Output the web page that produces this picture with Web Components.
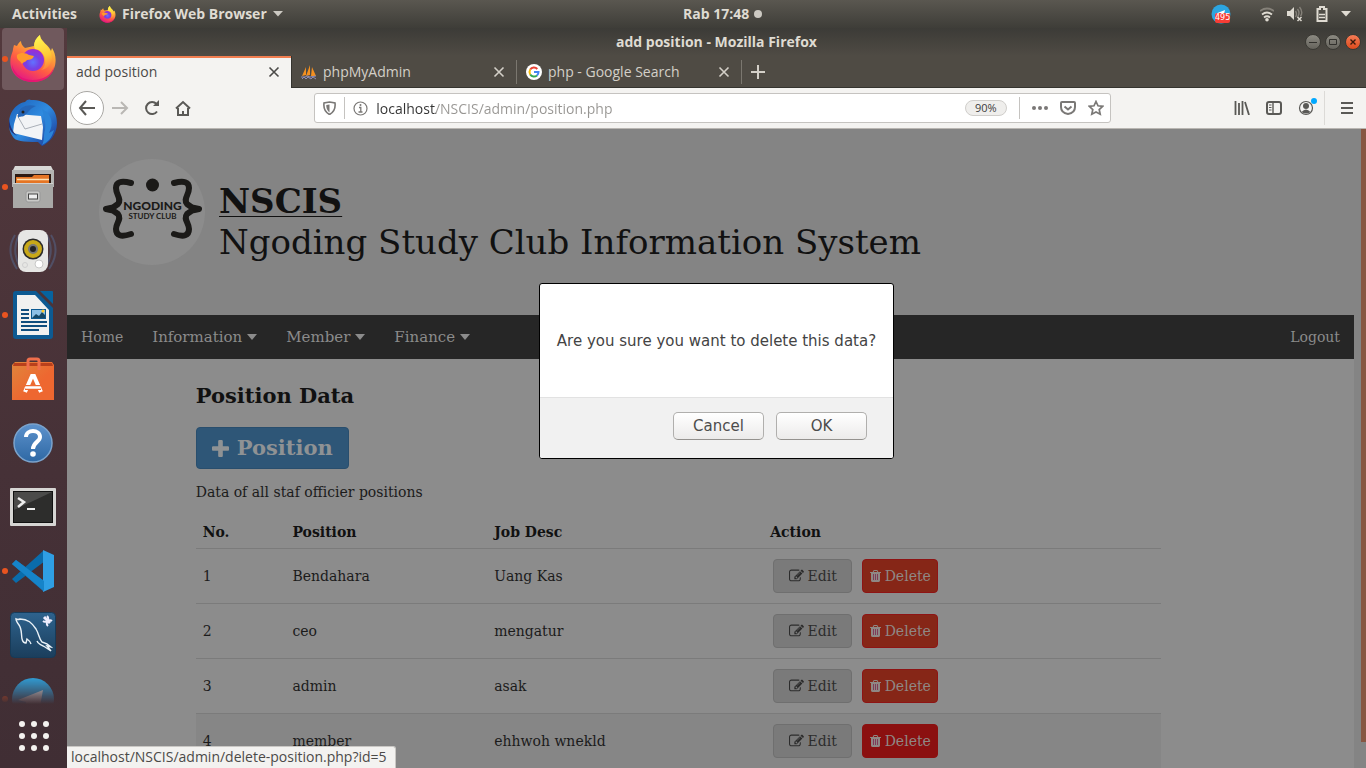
<!DOCTYPE html>
<html lang="id">
<head>
<meta charset="utf-8">
<title>add position - Mozilla Firefox</title>
<style>
  html, body { margin: 0; height: 100%; }
  body { overflow: hidden; font: 14px/20px "Open Sans", "Noto Sans", sans-serif; }
</style>
</head>
<body>
<desktop-shell></desktop-shell>
<script>
const base = `*{box-sizing:border-box}button{font:inherit;color:inherit;background:none;border:0;padding:0;margin:0}a{color:inherit;text-decoration:none}svg{display:block;flex:none}`;

/* Registers an element whose shadow root is cloned from a template. */
function component(name, css, html, setup) {
  const tpl = document.createElement('template');
  tpl.innerHTML = `<style>${base}${css}</style>${html}`;
  customElements.define(name, class extends HTMLElement {
    constructor() {
      super();
      this.attachShadow({ mode: 'open' }).append(tpl.content.cloneNode(true));
    }
    connectedCallback() { if (setup) setup(this, this.shadowRoot); }
  });
}

const firefox = id => `
  <defs>
    <linearGradient id="${id}a" x1=".8" y1="0" x2=".3" y2="1"><stop offset="0" stop-color="#fff44f"/><stop offset=".35" stop-color="#ffa436"/><stop offset=".65" stop-color="#ff5a45"/><stop offset="1" stop-color="#e31587"/></linearGradient>
    <radialGradient id="${id}b" cx=".5" cy=".6" r=".6"><stop offset="0" stop-color="#6173ff"/><stop offset=".5" stop-color="#7542e5"/><stop offset="1" stop-color="#a12ad0"/></radialGradient>
    <linearGradient id="${id}c" x1=".5" y1="0" x2=".7" y2="1"><stop offset="0" stop-color="#fff650"/><stop offset=".6" stop-color="#ffc936"/><stop offset="1" stop-color="#ff7a3a"/></linearGradient>
  </defs>
  <path d="M4 14c0 3-2 5-2.600 11C.500 38 10 47 24 47s22.600-10 22.600-22c0-5-1.600-9-3.600-12l-1 3c-2-5-6-7-8-10-2-2-3-4-3-6-4 3-6 7-6 11l-9 2c-3-2-4-5-4-7-2 1-3 3-4 5l-3-1z" fill="url(#${id}a)"/>
  <circle cx="24" cy="25" r="11" fill="url(#${id}b)"/>
  <path d="M31 0c-5 4-7 9-5 14 4 0 9 4 10 10 1 5-1 9-4 11 6-1 10-5 11-11 0-8-4-12-8-16-3-3-4-5-4-8z" fill="url(#${id}c)"/>
  <path d="M8 20c4-3 9-2 12 0l5 1c-1 3-4 4-7 4-1 2-4 2-5 4-2-4-6-4-5-9z" fill="#ff9a2b"/>
  <path d="M3 30c3 10 11 15 21 15s18-5 21-13c-1 9-10 15-21 15S3 40 3 30z" fill="#e31370" opacity=".8"/>`;

/* ---------- top panel ---------- */
component('top-panel', `
  :host{display:grid;grid-template-columns:1fr 1fr;height:28px;background:linear-gradient(#5a5750,#3e3d38);color:#dfdbd2;font-weight:700}
  div{display:flex;align-items:center;min-width:0}
  .l{padding-left:12px;gap:22px}.app{display:flex;align-items:center;gap:6px}
  .r{justify-content:space-between;padding-right:15px}.clock{display:flex;align-items:center;gap:5px}
  .clock i{width:8px;height:8px;border-radius:50%;background:#ccc9c2}
  .tray{gap:13px}.tg{position:relative;margin-right:16px}
  .tg b{position:absolute;left:4px;top:9px;background:#f73d35;border-radius:2px;color:#fff;font:400 8px/10px "DejaVu Sans",sans-serif;width:15px;text-align:center}`,
  `<div class="l"><button>Activities</button><button class="app"><svg width="17" height="17" viewBox="0 0 48 48">${firefox('p')}</svg>Firefox Web Browser<svg width="10" height="6" viewBox="0 0 10 6"><path d="M0 0h10L5 5.500z" fill="#ccc9c2"/></svg></button></div>
  <div class="r"><button class="clock">Rab 17:48 <i></i></button>
    <div class="tray">
      <div class="tg"><svg width="20" height="20" viewBox="0 0 20 20"><circle cx="10" cy="10" r="9.500" fill="#2ca5e0"/><path d="M4 10l10-4-2 8z" fill="#fff"/></svg><b>495</b></div>
      <svg width="14" height="15" viewBox="0 0 14 15" fill="none" stroke-width="1.800"><path d="M0 4Q7-1 14 4" stroke="#858179"/><path d="M2 7.500q5-4 10 0M4 10.500q3-2.500 6 0" stroke="#dfdbd2"/><circle cx="7" cy="12.800" r="1.800" fill="#dfdbd2"/></svg>
      <svg width="16" height="16" viewBox="0 0 16 16"><path d="M0 5h3l4-4v13l-4-4H0z" fill="#dfdbd2"/><path d="M8.500 5q2 3 0 6M10.500 3q3 4 0 8M12.500 1q4 5 1 9" stroke="#858179" stroke-width="1.400" fill="none"/><path d="M10.500 11l4 4m0-4l-4 4" stroke="#dfdbd2" stroke-width="1.500"/></svg>
      <svg width="12" height="16" viewBox="0 0 12 16"><path d="M1.500 3H4V1h4v2h2.500v12h-9z" fill="none" stroke="#dfdbd2" stroke-width="2"/><path d="M3 8.500h6M3 11.500h6" stroke="#dfdbd2" stroke-width="1.500"/></svg>
      <svg width="10" height="6" viewBox="0 0 10 6"><path d="M0 0h10L5 5.500z" fill="#dfdbd2"/></svg>
    </div></div>`);

/* ---------- dock ---------- */
component('dock-item', `
  :host{display:grid;place-items:center;position:relative;height:62px;flex:none;margin:0 3px 0 2px;border-radius:4px}
  :host([active]){background:#70595d}
  :host([running])::before{content:"";position:absolute;left:0;top:28px;width:6px;height:6px;border-radius:50%;background:#e95420}
  button{display:block}`, `<button><slot></slot></button>`,
  (el, root) => root.querySelector('button').setAttribute('aria-label', el.getAttribute('label')));

component('app-dock', `
  :host{display:flex;flex-direction:column;background:linear-gradient(#53393d,#463137 60%,#402e34);min-height:0}
  .list{flex:1;min-height:0;overflow:hidden;display:flex;flex-direction:column;gap:2px;-webkit-mask:linear-gradient(#000 calc(100% - 28px),transparent)}
  .all{display:grid;place-items:center;height:64px;flex:none}`,
  `<div class="list">
  <dock-item label="Firefox" active running><svg width="48" height="48" viewBox="0 0 48 48">${firefox('d')}</svg></dock-item>
  <dock-item label="Thunderbird"><svg width="48" height="48" viewBox="0 0 48 48"><defs><linearGradient id="t" x2="1" y2="1"><stop stop-color="#1c5fb8"/><stop offset=".5" stop-color="#2f8be0"/><stop offset="1" stop-color="#1a2f8c"/></linearGradient></defs><path d="M0 25C0 10 10 4 16 3c2-3 5-3 6-2 15 0 26 8 26 23 0 12-8 20-15 23l-4-4C14 43 6 42 4 38 1 34 0 30 0 25z" fill="url(#t)"/><path d="M8 15l24 2 2 11-1 13-29-7 1-9z" fill="#f2f4f6"/><path d="M8 16l8 14 17-5" fill="none" stroke="#aab0b8"/><path d="M9 16C10 7 19 5 27 7c-6 2-8 7-12 10-2 1-5 0-6 2z" fill="#2566b8"/><circle cx="14" cy="13" r="1.500" fill="#222"/><path d="M33 10c10 5 12 15 7 24l5-3c-2 8-6 12-12 15 3-6 1-9 3-15 1-8-1-14-3-21z" fill="#2b84d8"/><path d="M0 20c1 8 4 13 8 17-4-2-7-5-8-9z" fill="#1e2f78"/></svg></dock-item>
  <dock-item label="Files" running><svg width="44" height="44" viewBox="0 0 44 44"><path d="M4 1h36l2 4H2z" fill="#d8d8d6"/><path d="M1 5h42v17H1z" fill="#b4b4b2"/><path d="M4 9h36v10H4z" fill="#2e1a12"/><path d="M5 12h16l2-2h15v9H5z" fill="#e57524"/><path d="M6 14.500h32" stroke="#ffe0b0" stroke-width="1.500"/><path d="M2 18h40v25H2z" fill="#a9a9a7"/><path d="M2 18h40v1H2z" fill="#d0d0ce"/><rect x="15" y="26" width="14" height="11" rx="2" fill="#c9c9c7" stroke="#999"/><rect x="17.500" y="29" width="9" height="5" fill="#eee" stroke="#444"/></svg></dock-item>
  <dock-item label="Rhythmbox"><svg width="48" height="48" viewBox="0 0 48 48"><path d="M6 8q-10 16 2 34M10 8Q2 24 11 40M42 8q10 16-2 34M38 8q8 16-1 32" fill="none" stroke="#5878a8" stroke-width="2" opacity=".4"/><rect x="9" y="3" width="30" height="42" rx="8" fill="#e6e6e4"/><circle cx="24" cy="22" r="10.500" fill="#2b2b2b"/><circle cx="24" cy="22" r="9" fill="#c8a818"/><circle cx="24" cy="22" r="5" fill="#777"/><circle cx="24" cy="22" r="3" fill="#222"/><circle cx="30" cy="37" r="4" fill="#fff" stroke="#c8c8c8"/><circle cx="16" cy="38" r="2.500" fill="none" stroke="#d0d0d0"/></svg></dock-item>
  <dock-item label="LibreOffice Writer" running><svg width="42" height="48" viewBox="0 0 42 48"><path d="M4 0h20l17 17v28q0 3-3 3H4q-3 0-3-3V3q0-3 3-3z" fill="#0d5a92"/><path d="M28 0h12q1 0 1 1v12z" fill="#07639f"/><path d="M5 4h18l14 15v25H5z" fill="#f1f1f0"/><path d="M9 19h8M9 23h8M9 27h8M9 31h26M9 35h26M9 39h18" stroke="#0f4d7d" stroke-width="2"/><rect x="19" y="18" width="15" height="10" fill="#0d5a92"/><rect x="20" y="19" width="13" height="8" fill="#8dc0e6"/><path d="M20 27l4-4 3 2 3-4 3 3v3z" fill="#154766"/><circle cx="31" cy="20" r="1.500" fill="#ffca28"/></svg></dock-item>
  <dock-item label="Ubuntu Software"><svg width="42" height="44" viewBox="0 0 42 44"><defs><linearGradient id="s" x2="1" y2="1"><stop stop-color="#e0863c"/><stop offset=".6" stop-color="#ee6730"/></linearGradient></defs><path d="M0 8l3-3h37l2 3v35H0z" fill="url(#s)"/><path d="M2 6h38l1 3H1z" fill="#b9401c"/><path d="M16 13V4q0-2 2-2h7q2 0 2 2v9" fill="none" stroke="#ef6f4c" stroke-width="3"/><path d="M13 35l7-16h2l7 16" fill="none" stroke="#fff" stroke-width="4"/><path d="M13 30.500h16" stroke="#ee6a33" stroke-width="5"/><path d="M14 30.500h14" stroke="#fff" stroke-width="2.500" stroke-linecap="round"/></svg></dock-item>
  <dock-item label="Help"><svg width="42" height="42" viewBox="0 0 42 42"><defs><linearGradient id="h" y2="1" x2="0"><stop stop-color="#5d92cc"/><stop offset="1" stop-color="#2e68a4"/></linearGradient></defs><circle cx="21" cy="21" r="19" fill="url(#h)" stroke="#7ba3cc" stroke-width="1.500"/><path d="M14 15c0-8 14-8 14 0 0 5-7 5-7 12" fill="none" stroke="#fff" stroke-width="4"/><circle cx="21" cy="32" r="2.800" fill="#fff"/></svg></dock-item>
  <dock-item label="Terminal"><svg width="46" height="38" viewBox="0 0 46 38"><rect width="46" height="38" rx="1" fill="#d6d5d3"/><rect x="3.500" y="3.500" width="39" height="31" fill="#2d2d2c" stroke="#111"/><path d="M4 4h38L4 22z" fill="#4b4b4a"/><path d="M8 10l6 4-6 5" fill="none" stroke="#eee" stroke-width="2.500"/><path d="M17 21h8" stroke="#eee" stroke-width="2"/></svg></dock-item>
  <dock-item label="Visual Studio Code" running><svg width="44" height="44" viewBox="0 0 44 44"><path d="M1 15l4-4L33 32l-1 10z" fill="#1379bd"/><path d="M1 30l4 4L34 12 32 2z" fill="#0a6cab"/><path d="M32 1l11 5v32l-11 5V1z" fill="#2f9fe4"/><path d="M1 15l4-4 28 21v10z" fill="#1684c9"/></svg></dock-item>
  <dock-item label="MySQL Workbench"><svg width="46" height="46" viewBox="0 0 46 46"><defs><linearGradient id="m" y2="1" x2="0"><stop stop-color="#2e638e"/><stop offset="1" stop-color="#1b3e5c"/></linearGradient></defs><rect x=".5" y=".5" width="45" height="45" rx="4" fill="url(#m)" stroke="#173b59"/><path d="M12 27C11 21 12 17 9 13Q6 9 6 7q2 1 4 0c8 0 12 4 16 10 3 5 3 10 6 13 4 1 6 2 9 5l-4-1 4 5-6-4c-7-4-7-3-8-6" fill="none" stroke="#e9f1f7" stroke-width="1.400"/><path d="M12 27q1 4 4 4l1-4q3 2 4 5" fill="none" stroke="#e9f1f7" stroke-width="1.400"/><path d="M34 5l6 6" stroke="#eef" stroke-width="3"/><path d="M33 9a3 3 0 0 0 4-5M38 14a3 3 0 0 1 4-5" stroke="#eef" stroke-width="2" fill="none"/></svg></dock-item>
  <dock-item label="Telegram" running><svg width="44" height="44" viewBox="0 0 44 44"><circle cx="22" cy="22" r="21" fill="#2fa3df"/><path d="M7 23l25-10-4 22-8-8-5 4v-6z" fill="#dfe8ee"/></svg></dock-item>
  </div>
  <button class="all" aria-label="Show applications"><svg width="30" height="30" viewBox="0 0 30 30" fill="#f4f2ef"><circle cx="3" cy="3" r="3"/><circle cx="15" cy="3" r="3"/><circle cx="27" cy="3" r="3"/><circle cx="3" cy="15" r="3"/><circle cx="15" cy="15" r="3"/><circle cx="27" cy="15" r="3"/><circle cx="3" cy="27" r="3"/><circle cx="15" cy="27" r="3"/><circle cx="27" cy="27" r="3"/></svg></button>`);

/* ---------- browser chrome ---------- */
component('title-bar', `
  :host{display:grid;grid-template-columns:1fr auto 1fr;align-items:center;height:28px;background:linear-gradient(#3c3b37,#4f4b44);color:#dfdbd2;font-weight:700}
  .b{grid-column:3;justify-self:end;display:flex;gap:4px;padding-right:5px}
  .b button{width:16px;height:16px;border-radius:50%;background:linear-gradient(#8c8a82,#65635c);border:1px solid #3a3934;display:grid;place-items:center}
  .b .x{background:linear-gradient(#f57c56,#dd4a1c)}span{grid-column:2}`,
  `<span>add position - Mozilla Firefox</span><div class="b">
  <button aria-label="Minimize"><svg width="8" height="8"><path d="M0 4.500h8" stroke="#32312d"/></svg></button>
  <button aria-label="Maximize"><svg width="8" height="8"><path d="M.5 1.500h7v5h-7z" fill="none" stroke="#32312d"/></svg></button>
  <button class="x" aria-label="Close"><svg width="8" height="8"><path d="M1.500 1.500l5 5m0-5l-5 5" stroke="#3a1a0d" stroke-width="1.400"/></svg></button></div>`);

component('browser-tab', `
  :host{display:flex;align-items:center;gap:6px;width:225px;height:32px;padding:0 12px 0 9px;color:#d4d0c8;position:relative}
  :host(:not([active]))::after{content:"";position:absolute;right:0;top:4px;height:24px;width:1px;background:#7b776f}
  :host([active]){background:linear-gradient(#f27e50,#f27e50) top/100% 2px no-repeat #f4f3f1;color:#4b4a48;border-right:1px solid #35342f;padding-right:11px}
  span{flex:1}`,
  `<slot name="icon"></slot><span><slot></slot></span><button aria-label="Close tab"><svg width="12" height="12"><path d="M1.500 1.500l9 9m0-9l-9 9" stroke="currentColor" stroke-width="1.600"/></svg></button>`);

component('tab-strip', `
  :host{display:flex;align-items:center;height:32px;background:#4f4b44;border-bottom:1px solid #35342f;color:#d4d0c8}
  .new{margin-left:9px}`,
  `<browser-tab active>add position</browser-tab>
  <browser-tab><svg slot="icon" width="16" height="16" viewBox="0 0 16 16"><path d="M1 12L5 3v8zM5 12l4-11v10zM10 12l1-9 4 9z" fill="#f49020"/><path d="M0 13h4l2-1 3 1 6-1M1 15l2-2 2 2 2-2 3 2 2-2 3 2" fill="none" stroke="#8c8cb8"/></svg>phpMyAdmin</browser-tab>
  <browser-tab><svg slot="icon" width="16" height="16" viewBox="0 0 16 16"><circle cx="8" cy="8" r="8" fill="#fff"/><g fill="none" stroke-width="2"><path d="M4.200 5.500A4.500 4.500 0 0 1 11.300 5" stroke="#ea4335"/><path d="M4.200 10.500a5 5 0 0 1 0-5" stroke="#fbbc05"/><path d="M4.200 10.500A4.500 4.500 0 0 0 11 11.400" stroke="#34a853"/><path d="M8 8h4.500a4.500 4.500 0 0 1-1.500 3.400" stroke="#4285f4"/></g></svg>php - Google Search</browser-tab>
  <button class="new" aria-label="New tab"><svg width="14" height="14"><path d="M7 0v14M0 7h14" stroke="currentColor" stroke-width="2"/></svg></button>`);

component('tool-bar', `
  :host{display:flex;align-items:center;height:41px;background:#f4f3f1;border-bottom:1px solid #b9b6b2;color:#5a5956;padding-left:3px}
  .back{width:34px;height:34px;border-radius:50%;border:1px solid #a9a7a4;background:#fff;display:grid;place-items:center}
  .nav{display:flex;align-items:center;gap:15px}.nav .back{margin-right:-8px}
  .sp{flex:3}
  form{flex:19;display:flex;align-items:center;height:30px;border:1px solid #c5c3c0;border-radius:3px;background:#fff;color:#7a7876;padding:0 6px 0 8px;margin:0;gap:8px;min-width:0}
  input{flex:1;min-width:0;border:0;outline:0;padding:0;font:inherit;height:24px;background:linear-gradient(90deg,#333 60px,#979592 60px);background-clip:text;-webkit-background-clip:text;color:transparent}
  hr{width:1px;height:22px;margin:0;border:0;background:#c5c3c0}
  .zoom{width:42px;height:16px;border:1px solid #d0cecb;border-radius:8px;background:#efeeec;color:#3c3c3c;font-size:11px;line-height:14px}
  .end{display:flex;align-items:center;gap:16px;padding-right:13px}.end hr{height:34px;margin-left:-10px;background:#dcdad7}
  .dots{margin-left:4px}`,
  `<div class="nav">
  <button class="back" aria-label="Back"><svg width="18" height="16" fill="none" stroke="currentColor" stroke-width="2"><path d="M8 1L2 8l6 7M2 8h15"/></svg></button>
  <button aria-label="Forward"><svg width="18" height="16" fill="none" stroke="#b9b7b4" stroke-width="2"><path d="M10 2l6 6-6 6M16 8H1"/></svg></button>
  <button aria-label="Reload"><svg width="16" height="16" fill="none" stroke="currentColor" stroke-width="2"><path d="M13 11.500A6 6 0 1 1 12.500 4"/><path d="M15 0v6H9z" fill="currentColor" stroke="none"/></svg></button>
  <button aria-label="Home"><svg width="16" height="16" fill="none" stroke="currentColor" stroke-width="2"><path d="M1 8.500L8 2l7 6.500M3 8v7h10V8M8 15v-4"/></svg></button></div>
  <div class="sp"></div>
  <form onsubmit="return false">
    <svg width="13" height="14" viewBox="0 0 13 14"><path d="M6.500 1l5.500 1q1 8-5.500 11.500Q0 10 1 2z" fill="none" stroke="currentColor" stroke-width="1.600"/><path d="M6.500 3.500v8Q3 9 3.300 4z" fill="currentColor"/></svg><hr>
    <svg width="15" height="15" viewBox="0 0 15 15"><circle cx="7.500" cy="7.500" r="6.500" fill="none" stroke="currentColor" stroke-width="1.200"/><path d="M6 6.500h1.800v4M5.500 11h4" stroke="currentColor" stroke-width="1.300" fill="none"/><circle cx="7.500" cy="4" r="1" fill="currentColor"/></svg>
    <input aria-label="Address" value="localhost/NSCIS/admin/position.php">
    <button type="button" class="zoom">90%</button><hr class="dots">
    <svg class="dots" width="16" height="4" fill="currentColor"><circle cx="2" cy="2" r="2"/><circle cx="8" cy="2" r="2"/><circle cx="14" cy="2" r="2"/></svg>
    <svg class="dots" width="16" height="14" fill="none" stroke="currentColor" stroke-width="2"><path d="M1 2q0-1 1-1h12q1 0 1 1v4q0 6-7 7-7-1-7-7zM4.500 5.500L8 8.500l3.500-3"/></svg>
    <svg class="dots" width="16" height="16" fill="none" stroke="currentColor" stroke-width="1.700"><path d="M8 1.500l2 4.300 4.700.5-3.500 3.200 1 4.700L8 11.900l-4.200 2.300 1-4.700L1.300 6.300l4.700-.5z"/></svg>
  </form><div class="sp"></div>
  <div class="end">
    <button aria-label="Library"><svg width="16" height="14" fill="none" stroke="currentColor" stroke-width="1.800"><path d="M1.500 0v14M5 2v12M8.500 0v14M11 1l4 13"/></svg></button>
    <button aria-label="Sidebar"><svg width="16" height="14" fill="none" stroke="currentColor" stroke-width="2"><rect x="1" y="1" width="14" height="12" rx="2"/><path d="M7 1v12" stroke-width="1.400"/><path d="M3 4h2.500M3 6.500h2.500M3 9h2.500" stroke-width="1"/></svg></button>
    <button aria-label="Account"><svg width="20" height="20"><circle cx="8" cy="10" r="6.500" fill="none" stroke="currentColor" stroke-width="1.200"/><circle cx="8" cy="8" r="3" fill="currentColor"/><path d="M3.500 14q4.500-5 9 0-4.500 3-9 0z" fill="currentColor"/><circle cx="16" cy="3" r="3" fill="#00a8ff"/></svg></button>
    <hr>
    <button aria-label="Menu"><svg width="12" height="12"><path d="M0 1h12M0 6h12M0 11h12" stroke="currentColor" stroke-width="2"/></svg></button></div>`);

/* ---------- web page ---------- */
component('site-header', `
  :host{display:flex;align-items:center;gap:14px;height:186px;padding:0 32px 20px;background:#848484;color:#111}
  h1{margin:20px 0 0;font:400 34px/41px "DejaVu Serif",serif}u{font-weight:700;display:block;text-decoration-thickness:1px;text-underline-offset:3px}`,
  `<svg width="106" height="106" viewBox="0 0 106 106" role="img" aria-label="Ngoding Study Club">
  <circle cx="53" cy="53" r="53" fill="#8c8c8c"/><circle cx="53.500" cy="26" r="6.500" fill="#1b1a18"/>
  <g fill="none" stroke="#1b1a18" stroke-width="6" stroke-linecap="round" stroke-linejoin="round"><path d="M32 24Q17 20 17 29C17 36 23 40 19 45L14 48.500L7 50L14 51.500L19 55C23 60 17 64 17 70Q17 80 32 75"/><path d="M75 24Q90 20 90 29C90 36 84 40 88 45L93 48.500L100 50L93 51.500L88 55C84 60 90 64 90 70Q90 80 75 75"/></g>
  <text x="53.500" y="51" text-anchor="middle" font-family="Lato,sans-serif" font-weight="900" font-size="12" fill="#1b1a18">NGODING</text>
  <text x="53.500" y="60" text-anchor="middle" font-family="Lato,sans-serif" font-weight="700" font-size="8" fill="#1b1a18">STUDY CLUB</text></svg>
  <h1><u>NSCIS</u>Ngoding Study Club Information System</h1>`);

component('site-nav', `
  :host{display:flex;height:44px;align-items:center;background:#262626;color:#8b8b8b;padding:0 14px;gap:29px;font:15px/20px "DejaVu Serif",serif}
  a{font-size:14px}button{display:flex;align-items:center;gap:5px}.out{margin-left:auto}`,
  `<a href="#">Home</a>` + ['Information', 'Member', 'Finance'].map(t => `<button>${t}<svg width="10" height="6"><path d="M0 0h10L5 6z" fill="currentColor"/></svg></button>`).join('') + `<a class="out" href="#">Logout</a>`);

component('action-button', `
  :host{display:inline-block}
  a{display:flex;align-items:center;justify-content:center;gap:4px;height:34px;width:79px;border:1px solid #6f6f6f;border-radius:4px;background:#7a7a7a;color:#2c2c2c}
  :host([kind=delete]) a{width:76px;background:#862617;border-color:#8e1414;color:#8f8885}
  :host([kind=delete][hot]) a{background:#8b1010;border-color:#8b1010}
  :host([kind=delete]) .e,:host([kind=edit]) .d{display:none}`,
  `<a href="#"><svg class="e" width="15" height="14" viewBox="0 128 1792 1536" fill="currentColor"><path d="M888 1184l116-116-152-152-116 116v56h96v96h56zm440-720q-16-16-33 1l-350 350q-17 17-1 33t33-1l350-350q17-17 1-33zm80 594v190q0 119-84.500 203.500t-203.500 84.500h-832q-119 0-203.500-84.500t-84.500-203.500v-832q0-119 84.500-203.500t203.500-84.500h832q63 0 117 25 15 7 18 23 3 17-9 29l-49 49q-14 14-32 8-23-6-45-6h-832q-66 0-113 47t-47 113v832q0 66 47 113t113 47h832q66 0 113-47t47-113v-126q0-13 9-22l64-64q15-15 35-7t20 29zm-96-738l288 288-672 672h-288v-288zm444 132l-92 92-288-288 92-92q28-28 68-28t68 28l152 152q28 28 28 68t-28 68z"/></svg>
  <svg class="d" width="11" height="12" viewBox="192 128 1408 1536"><path d="M480 600h832v840H480z" fill="#803a58"/><path fill="currentColor" fill-rule="evenodd" d="M704 1376v-704q0-14-9-23t-23-9h-64q-14 0-23 9t-9 23v704q0 14 9 23t23 9h64q14 0 23-9t9-23zm256 0v-704q0-14-9-23t-23-9h-64q-14 0-23 9t-9 23v704q0 14 9 23t23 9h64q14 0 23-9t9-23zm256 0v-704q0-14-9-23t-23-9h-64q-14 0-23 9t-9 23v704q0 14 9 23t23 9h64q14 0 23-9t9-23zm-544-992h448l-48-117q-7-9-17-11h-317q-10 2-17 11zm928 32v64q0 14-9 23t-23 9h-96v948q0 83-47 143.500t-113 60.500h-832q-66 0-113-58.500t-47-141.500v-952h-96q-14 0-23-9t-9-23v-64q0-14 9-23t23-9h309l70-167q15-37 54-63t79-26h320q40 0 79 26t54 63l70 167h309q14 0 23 9t9 23z"/></svg><slot></slot></a>`);

const rows = [['1', 'Bendahara', 'Uang Kas'], ['2', 'ceo', 'mengatur'], ['3', 'admin', 'asak'], ['4', 'member', 'ehhwoh wnekld']];
component('position-table', `
  :host{display:block}
  table{width:100%;border-collapse:collapse;table-layout:fixed}
  th,td{text-align:left;padding:0 7px}thead th{height:32px;color:#111}
  td{border-top:1px solid #7b7b7b;height:55px}tr.hot{background:#868686}
  .no{width:9.3%}.pos{width:20.9%}.job{width:28.6%}
  .act{display:flex;gap:10px;padding-left:3px}`,
  `<table><thead><tr><th class="no">No.</th><th class="pos">Position</th><th class="job">Job Desc</th><th>Action</th></tr></thead><tbody>` +
  rows.map((r, i) => `<tr${i === 3 ? ' class="hot"' : ''}>${r.map(c => `<td>${c}</td>`).join('')}<td><div class="act"><action-button kind="edit">Edit</action-button><action-button kind="delete"${i === 3 ? ' hot' : ''}>Delete</action-button></div></td></tr>`).join('') + `</tbody></table>`);

component('position-page', `
  :host{display:block;width:75%;margin-left:10%;padding-top:23px;font:14px/20px "DejaVu Serif",serif;color:#1b1b1b}
  h2{margin:0 0 18px;font-size:21px;line-height:27px;color:#111}
  .add{display:inline-flex;vertical-align:top;align-items:center;justify-content:center;gap:8px;width:153px;height:42px;background:#2e5677;border:1px solid #294e6d;border-radius:4px;color:#8f9294;font-size:21px;font-weight:700}
  p{margin:13px 0 14px}`,
  `<h2>Position Data</h2><a class="add" href="#"><svg width="17" height="17" viewBox="192 128 1408 1408" fill="currentColor"><path d="M1600 736v192q0 40-28 68t-68 28h-416v416q0 40-28 68t-68 28h-192q-40 0-68-28t-28-68v-416h-416q-40 0-68-28t-28-68v-192q0-40 28-68t68-28h416v-416q0-40 28-68t68-28h192q40 0 68 28t28 68v416h416q40 0 68 28t28 68z"/></svg>Position</a>
  <p>Data of all staf officier positions</p><position-table></position-table>`);

component('confirm-dialog', `
  :host{position:absolute;z-index:2;top:154px;left:0;right:0;display:flex;justify-content:center;font:15px/20px "DejaVu Sans",sans-serif;color:#444}
  dialog{position:static;margin:0;padding:0;width:355px;height:176px;border:1px solid #000;border-radius:3px;background:#fff;color:inherit;overflow:hidden;display:flex;flex-direction:column}
  p{flex:1;margin:0;display:grid;place-items:center}
  div{display:flex;justify-content:flex-end;gap:12px;height:61px;padding:14px 26px 0;background:#f1f1f1;border-top:1px solid #e2e2e2}
  button{width:91px;height:28px;border:1px solid #b0afad;border-bottom-color:#94928e;border-radius:5px;background:linear-gradient(#fff,#ecebea);color:#4c4c4c}`,
  `<dialog open><p><slot></slot></p><div><button>Cancel</button><button>OK</button></div></dialog>`);

component('status-tip', `
  :host{position:absolute;z-index:3;left:0;bottom:0;padding:0 8px 1px 4px;background:#f3f2f0;border:1px solid #c9c7c4;border-width:1px 1px 0 0;border-radius:0 3px 0 0;color:#4b4a48;line-height:20px}`, `<slot></slot>`);

component('browser-window', `
  :host{display:flex;flex-direction:column;min-width:0;min-height:0}
  main{flex:1;min-height:0;position:relative;overflow:hidden;display:flex;background:#848484}
  .page{flex:1;min-width:0;background:linear-gradient(#848484,#848484) right/7px 100% no-repeat #8c8c8c}
  site-nav{margin-right:7px}.wrap{padding-right:7px}
  .bar{width:5px;margin-bottom:26px;background:#875642}`,
  `<title-bar></title-bar><tab-strip></tab-strip><tool-bar></tool-bar>
  <main><div class="page"><site-header></site-header><site-nav></site-nav><div class="wrap"><position-page></position-page></div></div><div class="bar"></div>
  <confirm-dialog>Are you sure you want to delete this data?</confirm-dialog>
  <status-tip>localhost/NSCIS/admin/delete-position.php?id=5</status-tip></main>`);

component('desktop-shell', `
  :host{display:grid;grid-template:28px minmax(0,1fr)/67px minmax(0,1fr);height:100vh}
  top-panel{grid-column:1/3}`, `<top-panel></top-panel><app-dock></app-dock><browser-window></browser-window>`);
</script>
</body>
</html>
